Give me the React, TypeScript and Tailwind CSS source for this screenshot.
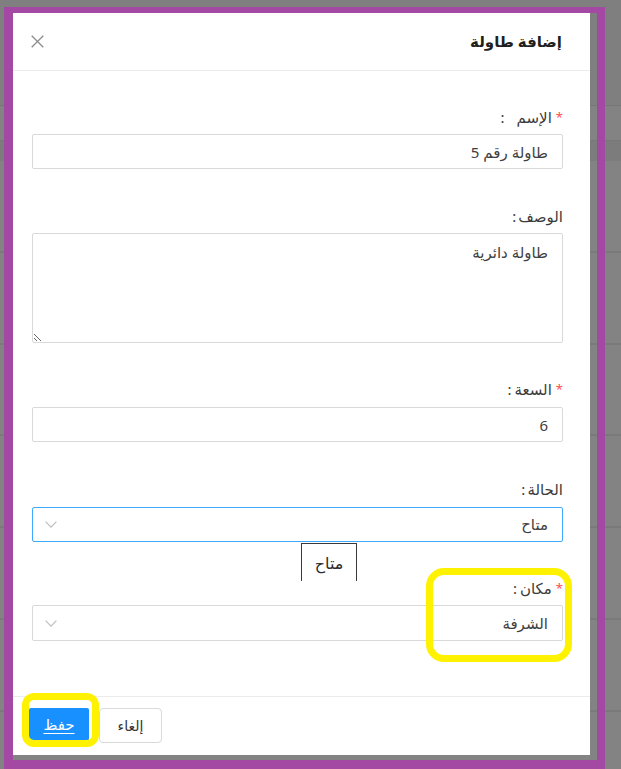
const FONT = "font-['Noto_Sans','DejaVu_Sans',sans-serif]"

// faint rows of the page behind the mask
const BG_ROWS = [
  { h: 'h-[105px]', bg: 'bg-[#7f7f7f]' },
  { h: 'h-[1px]', bg: 'bg-[#767676]' },
  { h: 'h-[34px]', bg: 'bg-[#838383]' },
  { h: 'h-[1px]', bg: 'bg-[#787878]' },
  { h: 'h-[20px]', bg: 'bg-[#7c7c7c]' },
  { h: 'h-[90px]', bg: 'bg-[#838383]' },
  { h: 'h-[2px]', bg: 'bg-[#7a7a7a]' },
  { h: 'h-[90px]', bg: 'bg-[#838383]' },
  { h: 'h-[2px]', bg: 'bg-[#7a7a7a]' },
  { h: 'h-[89px]', bg: 'bg-[#838383]' },
  { h: 'h-[2px]', bg: 'bg-[#7a7a7a]' },
  { h: 'h-[90px]', bg: 'bg-[#838383]' },
  { h: 'h-[2px]', bg: 'bg-[#7a7a7a]' },
  { h: 'h-[90px]', bg: 'bg-[#838383]' },
  { h: 'h-[2px]', bg: 'bg-[#7a7a7a]' },
  { h: 'h-[90px]', bg: 'bg-[#838383]' },
  { h: 'h-[2px]', bg: 'bg-[#7a7a7a]' },
  { h: 'h-[60px]', bg: 'bg-[#838383]' },
]

function Label({ text, required, colon }: { text: string; required?: boolean; colon: string }) {
  return (
    <div dir="rtl" className="flex h-[22px] items-center text-[15px] leading-[22px] text-[#3b3b3b]">
      {required && <span className="ml-[4px] text-[13px] text-[#ff4d4f]">*</span>}
      <span>{text}</span>
      <span className={colon}>:</span>
    </div>
  )
}

function Chevron() {
  return (
    <svg width="12" height="7" viewBox="0 0 12 7" className="shrink-0">
      <path d="M0.6 0.6 L6 6.2 L11.4 0.6" stroke="#bfbfbf" strokeWidth="1.2" fill="none" />
    </svg>
  )
}

export default function App() {
  return (
    <div className={`relative h-[769px] w-[621px] overflow-hidden bg-[#838383] ${FONT}`}>
      {/* page behind */}
      <div className="flex flex-col">
        {BG_ROWS.map((r, i) => (
          <div key={i} className={`${r.h} ${r.bg} shrink-0`} />
        ))}
      </div>

      {/* modal layer */}
      <div className="absolute inset-0 pl-[4px] pt-[7px]">
        <div className="h-[762px] w-[601px] border-b-[9px] border-l-[9px] border-r-[8px] border-t-[6px] border-[#a349a4]">
          <div className="flex h-[742px] w-[577px] flex-col bg-white">
            {/* Header */}
            <div className="flex h-[58px] shrink-0 items-center justify-between border-b border-[#ebebeb] pl-[18px] pr-[28px]">
              <svg width="13" height="13" viewBox="0 0 13 13" className="shrink-0">
                <path d="M0.7 0.7 L12.3 12.3 M12.3 0.7 L0.7 12.3" stroke="#8c8c8c" strokeWidth="1.3" fill="none" />
              </svg>
              <p dir="rtl" className="text-[15px] font-bold text-[#1f1f1f]">إضافة طاولة</p>
            </div>

            {/* Body */}
            <div className="flex flex-1 flex-col pl-[19px] pr-[27px] pt-[35px]">
              <Label text="الإسم" required colon="mr-[12px]" />
              <input
                dir="rtl"
                defaultValue="طاولة رقم 5"
                className="mt-[6px] h-[35px] w-full rounded-[2px] border border-[#d9d9d9] px-[14px] text-[15px] text-[#404040] outline-none"
              />

              <div className="mt-[36px]">
                <Label text="الوصف" colon="mr-[2px]" />
              </div>
              <textarea
                dir="rtl"
                defaultValue="طاولة دائرية"
                className="mt-[6px] h-[110px] w-full resize-y rounded-[2px] border border-[#d9d9d9] px-[14px] py-[7px] text-[15px] leading-[22px] text-[#404040] outline-none"
              />

              <div className="mt-[35px]">
                <Label text="السعة" required colon="mr-[3px]" />
              </div>
              <input
                dir="rtl"
                defaultValue="6"
                className="mt-[7px] h-[35px] w-full rounded-[2px] border border-[#d9d9d9] px-[14px] text-[15px] text-[#404040] outline-none"
              />

              <div className="mt-[36px]">
                <Label text="الحالة" colon="mr-[2px]" />
              </div>
              <div className="relative mt-[7px]">
                <div dir="rtl" className="flex h-[35px] items-center justify-between rounded-[2px] border border-[#40a9ff] pl-[12px] pr-[14px] text-[15px] text-[#404040]">
                  <span>متاح</span>
                  <Chevron />
                </div>
                {/* open option */}
                <div className="absolute left-[269px] top-[36px] flex h-[38px] w-[56px] items-center justify-center border border-b-0 border-[#3a3a3a] bg-white text-[16px] text-[#2b2b2b]">
                  متاح
                </div>
              </div>

              <div className="mt-[35px]">
                <Label text="مكان" required colon="mr-[3px]" />
              </div>
              <div dir="rtl" className="mt-[6px] flex h-[36px] items-center justify-between rounded-[2px] border border-[#d9d9d9] pl-[12px] pr-[14px] text-[15px] text-[#404040]">
                <span>الشرفة</span>
                <Chevron />
              </div>
            </div>

            {/* Footer */}
            <div className="flex h-[59px] shrink-0 items-start gap-[10px] border-t border-[#ebebeb] pl-[16px] pt-[11px]">
              <button className="h-[33px] w-[60px] rounded-[2px] bg-[#1890ff] text-[15px] text-white underline underline-offset-[3px]">
                حفظ
              </button>
              <button className="h-[35px] w-[63px] rounded-[4px] border border-[#d9d9d9] bg-white text-[14px] text-[#333]">
                إلغاء
              </button>
            </div>
          </div>
        </div>
      </div>

      {/* yellow highlights */}
      <div className="pointer-events-none absolute left-[426px] top-[568px] h-[94px] w-[146px] rounded-[18px] border-[7px] border-[#fff200]" />
      <div className="pointer-events-none absolute left-[22px] top-[693px] h-[54px] w-[77px] rounded-[12px] border-[7px] border-[#fff200]" />
    </div>
  )
}
